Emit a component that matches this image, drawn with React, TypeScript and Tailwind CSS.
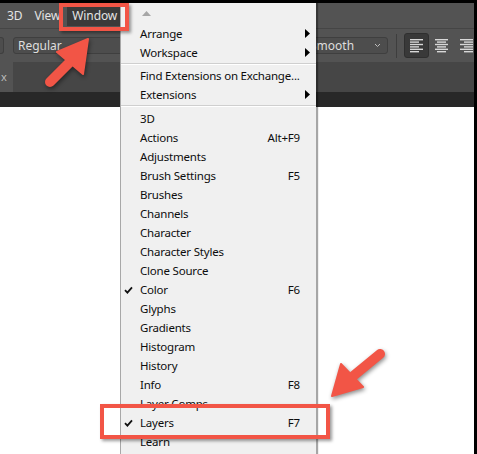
import React from 'react'

type Item = { label: string; shortcut?: string; checked?: boolean; sub?: boolean }

const topItems: Item[] = [
  { label: 'Arrange', sub: true },
  { label: 'Workspace', sub: true },
]

const extItems: Item[] = [
  { label: 'Find Extensions on Exchange...' },
  { label: 'Extensions', sub: true },
]

const panelItems: Item[] = [
  { label: '3D' },
  { label: 'Actions', shortcut: 'Alt+F9' },
  { label: 'Adjustments' },
  { label: 'Brush Settings', shortcut: 'F5' },
  { label: 'Brushes' },
  { label: 'Channels' },
  { label: 'Character' },
  { label: 'Character Styles' },
  { label: 'Clone Source' },
  { label: 'Color', shortcut: 'F6', checked: true },
  { label: 'Glyphs' },
  { label: 'Gradients' },
  { label: 'Histogram' },
  { label: 'History' },
  { label: 'Info', shortcut: 'F8' },
  { label: 'Layer Comps' },
  { label: 'Layers', shortcut: 'F7', checked: true },
  { label: 'Learn' },
]

function Check() {
  return (
    <svg width="9" height="8" viewBox="0 0 9 8" className="absolute left-[3px] top-[6px]">
      <path d="M1 4.2 L3.4 6.6 L8 1.4" fill="none" stroke="#111" strokeWidth="1.8" />
    </svg>
  )
}

function MenuRow({ item }: { item: Item }) {
  return (
    <div className="relative flex h-[19px] items-center whitespace-nowrap pl-[19px] pr-[16px] text-[11.5px] tracking-[-0.2px] text-[#0d0d0d]">
      {item.checked && <Check />}
      <span className="flex-1">{item.label}</span>
      {item.shortcut && <span>{item.shortcut}</span>}
      {item.sub && (
        <svg width="5" height="9" viewBox="0 0 5 9" className="absolute right-[6px] top-[5px]">
          <path d="M0 0 L5 4.5 L0 9 Z" fill="#000" />
        </svg>
      )}
    </div>
  )
}

function Separator() {
  return (
    <div className="h-[4px] pt-[1px]">
      <div className="border-t border-b border-t-[#cfcfcf] border-b-white" />
    </div>
  )
}

function AlignIcon({ kind }: { kind: 'left' | 'center' | 'right' }) {
  const widths = [13, 9, 13, 9, 13, 9]
  return (
    <svg width="14" height="14" viewBox="0 0 14 14">
      {widths.map((w, i) => {
        const x = kind === 'left' ? 0 : kind === 'center' ? (13 - w) / 2 : 13 - w
        return <rect key={i} x={x} y={i * 2.4} width={w} height="1.4" fill="#d8d8d8" />
      })}
    </svg>
  )
}

export default function App() {
  return (
    <div className="relative h-[454px] w-[477px] overflow-hidden border-t-[3px] border-r-[3px] border-black bg-white font-['Noto_Sans',sans-serif]">
      {/* photoshop chrome */}
      <div className="flex h-[25px] items-center whitespace-nowrap bg-[#535353] text-[12px] tracking-[-0.1px] text-[#e4e4e4]">
        <span className="ml-[7px]">3D</span>
        <span className="ml-[12px]">View</span>
        <span className="ml-[7px] flex h-[20px] items-center bg-[#3a3a3a] px-[5px]">Window</span>
      </div>
      <div className="flex h-[34px] items-center whitespace-nowrap border-t border-[#454545] bg-[#535353] text-[12px] text-[#dedede]">
        <div className="h-[17px] w-[4px] rounded-r-[3px] border border-l-0 border-[#3f3f3f] bg-[#4d4d4d]" />
        <div className="ml-[9px] flex h-[17px] w-[120px] items-center rounded-[3px] border border-[#3f3f3f] bg-[#4d4d4d] pl-[4px]">
          Regular
        </div>
        <div className="ml-[167px] flex h-[17px] w-[88px] items-center justify-between rounded-[3px] border border-[#3f3f3f] bg-[#4d4d4d] pl-[9px] pr-[6px]">
          <span>Smooth</span>
          <svg width="7" height="5" viewBox="0 0 7 5">
            <path d="M1 1 L3.5 3.5 L6 1" fill="none" stroke="#bdbdbd" strokeWidth="1" />
          </svg>
        </div>
        <div className="ml-[8px] h-[24px] w-px bg-[#3e3e3e]" />
        <div className="ml-[7px] flex h-[25px] w-[25px] items-center justify-center rounded-[3px] border border-[#2f2f2f] bg-[#393939]">
          <AlignIcon kind="left" />
        </div>
        <div className="ml-[6px]"><AlignIcon kind="center" /></div>
        <div className="ml-[11px]"><AlignIcon kind="right" /></div>
      </div>
      <div className="flex h-[30px] bg-[#464646]">
        <div className="flex w-[13px] items-center bg-[#535353] text-[11px] text-[#bbb]">
          <span className="ml-[1px]">x</span>
        </div>
      </div>
      <div className="h-[15px] bg-[#282828]" />

      {/* Window menu */}
      <div className="absolute bottom-[-20px] left-[120px] top-0 w-[196px] border-l border-[#a8a8a8] bg-[#f0f0f0] shadow-[2px_0_1px_rgba(0,0,0,0.35)]">
        <div className="flex h-[21px] items-start pl-[21px] pt-[8px]">
          <svg width="9" height="5" viewBox="0 0 9 5"><path d="M0 5 L4.5 0 L9 5 Z" fill="#a6a6a6" /></svg>
        </div>
        {topItems.map((it) => <MenuRow key={it.label} item={it} />)}
        <Separator />
        {extItems.map((it) => <MenuRow key={it.label} item={it} />)}
        <Separator />
        <div className="h-[1px]" />
        {panelItems.map((it) => <MenuRow key={it.label} item={it} />)}
      </div>

      {/* annotations */}
      <div className="absolute left-[59px] top-0 h-[28px] w-[70px] border-[4px] border-[#f25546] shadow-[2px_2px_3px_rgba(0,0,0,0.4)]" />
      <div className="absolute left-[100px] top-[401px] h-[35px] w-[230px] border-[4px] border-[#f25546] shadow-[2px_2px_3px_rgba(0,0,0,0.4)]" />
      <svg width="477" height="454" viewBox="0 0 477 454" className="pointer-events-none absolute left-0 top-[-3px] drop-shadow-[1px_2px_2px_rgba(0,0,0,0.45)]">
        <line x1="50" y1="82" x2="71" y2="61" stroke="#f25546" strokeWidth="10" strokeLinecap="round" />
        <path d="M88 39 L57 52 L83 74 Z" fill="#f25546" stroke="#f25546" strokeWidth="2" strokeLinejoin="round" />
        <line x1="380" y1="354" x2="352" y2="377" stroke="#f25546" strokeWidth="10" strokeLinecap="round" />
        <path d="M332 396 L341 364 L363 387 Z" fill="#f25546" stroke="#f25546" strokeWidth="2" strokeLinejoin="round" />
      </svg>
    </div>
  )
}
